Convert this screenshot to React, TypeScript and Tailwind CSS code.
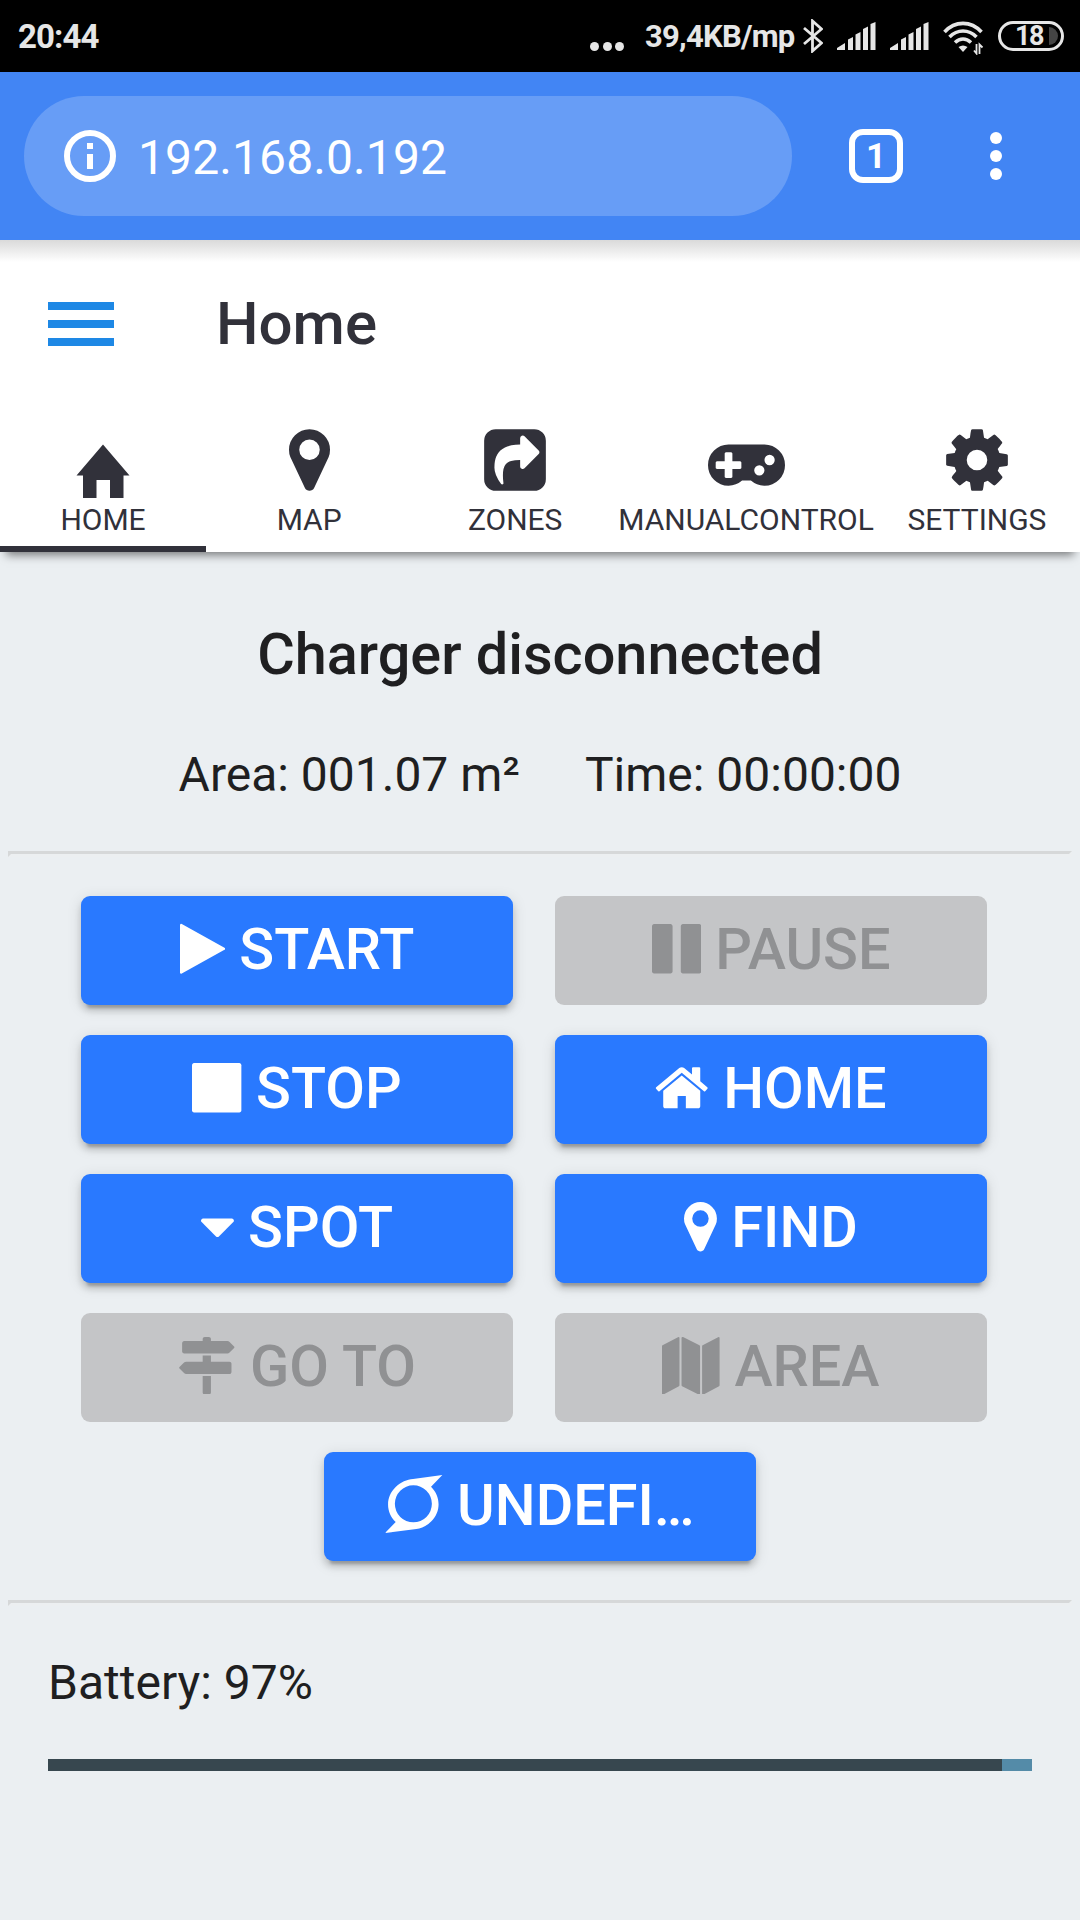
// ============================================================
// Mower control panel: browser chrome + home tab
// ============================================================
import type { ReactNode } from 'react';
import clsx from 'clsx';

type Glyph = { w: number; d: string };

// Font glyphs, 1792 units per em, y axis pointing up from the baseline
const GLYPHS = {
  marker: {
    w: 1024,
    d: 'M768 896q0 106 -75 181t-181 75t-181 -75t-75 -181t75 -181t181 -75t181 75t75 181zM1024 896q0 -109 -33 -179l-364 -774q-16 -33 -47.5 -52t-67.5 -19t-67.5 19t-46.5 52l-365 774q-33 70 -33 179q0 212 150 362t362 150t362 -150t150 -362z',
  },
  share: {
    w: 1536,
    d: 'M1005 435l352 352q19 19 19 45t-19 45l-352 352q-30 31 -69 14q-40 -17 -40 -59v-160q-119 0 -216 -19.5t-162.5 -51t-114 -79t-76.5 -95.5t-44.5 -109t-21.5 -111.5t-5 -110.5q0 -181 167 -404q11 -12 25 -12q7 0 13 3q22 9 19 33q-44 354 62 473q46 52 130 75.5 t224 23.5v-160q0 -42 40 -59q12 -5 24 -5q26 0 45 19zM1536 1120v-960q0 -119 -84.5 -203.5t-203.5 -84.5h-960q-119 0 -203.5 84.5t-84.5 203.5v960q0 119 84.5 203.5t203.5 84.5h960q119 0 203.5 -84.5t84.5 -203.5z',
  },
  gamepad: {
    w: 1920,
    d: 'M832 448v128q0 14 -9 23t-23 9h-192v192q0 14 -9 23t-23 9h-128q-14 0 -23 -9t-9 -23v-192h-192q-14 0 -23 -9t-9 -23v-128q0 -14 9 -23t23 -9h192v-192q0 -14 9 -23t23 -9h128q14 0 23 9t9 23v192h192q14 0 23 9t9 23zM1408 384q0 53 -37.5 90.5t-90.5 37.5t-90.5 -37.5t-37.5 -90.5 t37.5 -90.5t90.5 -37.5t90.5 37.5t37.5 90.5zM1664 640q0 53 -37.5 90.5t-90.5 37.5t-90.5 -37.5t-37.5 -90.5t37.5 -90.5t90.5 -37.5t90.5 37.5t37.5 90.5zM1920 512q0 -212 -150 -362t-362 -150q-192 0 -338 128h-220q-146 -128 -338 -128q-212 0 -362 150t-150 362 t150 362t362 150h896q212 0 362 -150t150 -362z',
  },
  cog: {
    w: 1536,
    d: 'M1024 640q0 106 -75 181t-181 75t-181 -75t-75 -181t75 -181t181 -75t181 75t75 181zM1536 749v-222q0 -12 -8 -23t-20 -13l-185 -28q-19 -54 -39 -91q35 -50 107 -138q10 -12 10 -25t-9 -23q-27 -37 -99 -108t-94 -71q-12 0 -26 9l-138 108q-44 -23 -91 -38 q-16 -136 -29 -186q-7 -28 -36 -28h-222q-14 0 -24.5 8.5t-11.5 21.5l-28 184q-49 16 -90 37l-141 -107q-10 -9 -25 -9q-14 0 -25 11q-126 114 -165 168q-7 10 -7 23q0 12 8 23q15 21 51 66.5t54 70.5q-27 50 -41 99l-183 27q-13 2 -21 12.5t-8 23.5v222q0 12 8 23t19 13 l186 28q14 46 39 92q-40 57 -107 138q-10 12 -10 24q0 10 9 23q26 36 98.5 107.5t94.5 71.5q13 0 26 -10l138 -107q44 23 91 38q16 136 29 186q7 28 36 28h222q14 0 24.5 -8.5t11.5 -21.5l28 -184q49 -16 90 -37l142 107q9 9 24 9q13 0 25 -10q129 -119 165 -170q7 -8 7 -22 q0 -12 -8 -23q-15 -21 -51 -66.5t-54 -70.5q26 -50 41 -98l183 -28q13 -2 21 -12.5t8 -23.5z',
  },
  play: {
    w: 1408,
    d: 'M1384 609l-1328 -738q-23 -13 -39.5 -3t-16.5 36v1472q0 26 16.5 36t39.5 -3l1328 -738q23 -13 23 -31t-23 -31z',
  },
  pause: {
    w: 1536,
    d: 'M1536 1344v-1408q0 -26 -19 -45t-45 -19h-512q-26 0 -45 19t-19 45v1408q0 26 19 45t45 19h512q26 0 45 -19t19 -45zM640 1344v-1408q0 -26 -19 -45t-45 -19h-512q-26 0 -45 19t-19 45v1408q0 26 19 45t45 19h512q26 0 45 -19t19 -45z',
  },
  stop: {
    w: 1536,
    d: 'M1536 1344v-1408q0 -26 -19 -45t-45 -19h-1408q-26 0 -45 19t-19 45v1408q0 26 19 45t45 19h1408q26 0 45 -19t19 -45z',
  },
  home: {
    w: 1664,
    d: 'M1408 544v-480q0 -26 -19 -45t-45 -19h-384v384h-256v-384h-384q-26 0 -45 19t-19 45v480q0 1 .5 3t.5 3l575 474l575 -474q1 -2 1 -6zM1631 613l-62 -74q-8 -9 -21 -11h-3q-13 0 -21 7l-692 577l-692 -577q-12 -8 -24 -7q-13 2 -21 11l-62 74q-8 10 -7 23.5t11 21.5 l719 599q32 26 76 26t76 -26l244 -204v195q0 14 9 23t23 9h192q14 0 23 -9t9 -23v-408l219 -182q10 -8 11 -21.5t-7 -23.5z',
  },
  caret: {
    w: 1024,
    d: 'M1024 832q0 -26 -19 -45l-448 -448q-19 -19 -45 -19t-45 19l-448 448q-19 19 -19 45t19 45t45 19h896q26 0 45 -19t19 -45z',
  },
  signs: {
    w: 1792,
    d: 'M1745 1239q10 -10 10 -23t-10 -23l-141 -141q-28 -28 -68 -28h-1344q-26 0 -45 19t-19 45v256q0 26 19 45t45 19h576v64q0 26 19 45t45 19h128q26 0 45 -19t19 -45v-64h512q40 0 68 -28zM768 320h256v-512q0 -26 -19 -45t-45 -19h-128q-26 0 -45 19t-19 45v512zM1600 768 q26 0 45 -19t19 -45v-256q0 -26 -19 -45t-45 -19h-1344q-40 0 -68 28l-141 141q-10 10 -10 23t10 23l141 141q28 28 68 28h512v192h256v-192h576z',
  },
  map: {
    w: 1792,
    d: 'M512 1536q13 0 22.5 -9.5t9.5 -22.5v-1472q0 -20 -17 -28l-480 -256q-7 -4 -15 -4q-13 0 -22.5 9.5t-9.5 22.5v1472q0 20 17 28l480 256q7 4 15 4zM1760 1536q13 0 22.5 -9.5t9.5 -22.5v-1472q0 -20 -17 -28l-480 -256q-7 -4 -15 -4q-13 0 -22.5 9.5t-9.5 22.5v1472 q0 20 17 28l480 256q7 4 15 4zM640 1536q8 0 14 -3l512 -256q18 -10 18 -29v-1472q0 -13 -9.5 -22.5t-22.5 -9.5q-8 0 -14 3l-512 256q-18 10 -18 29v1472q0 13 9.5 22.5t22.5 9.5z',
  },
} satisfies Record<string, Glyph>;

type GlyphName = keyof typeof GLYPHS;

function GlyphIcon({ name, className }: { name: GlyphName; className: string }) {
  const glyph = GLYPHS[name];
  return (
    <svg viewBox={`0 0 ${glyph.w} 1792`} fill="currentColor" className={className}>
      <path transform="translate(0 1536) scale(1 -1)" d={glyph.d} />
    </svg>
  );
}

// Ring with two spikes, used by the mowing mode button
function ModeIcon() {
  return (
    <svg viewBox="0 0 172 174" fill="currentColor" className="inline h-[58px] w-[57.4px] align-[-8.4px]">
      <path
        fillRule="evenodd"
        d="M0 174L32 141C3 114 0 66 32 36C47 21 66 14 84 12L172 0L138 35C168 64 168 110 139 139C124 154 108 160 94 162ZM85 31A55.5 55.5 0 1 0 85 142A55.5 55.5 0 1 0 85 31Z"
      />
    </svg>
  );
}

function SignalIcon() {
  return (
    <svg viewBox="0 0 39 28" fill="currentColor" className="h-7 w-[39px]">
      <path d="M0 28v-2l8-5v7zM11 17.5l5-2.5v13h-5zM18.500 12.500l5-2.500v18h-5zM26 7l5-2.500V28h-5zM33.500 2l5-2v28h-5z" />
    </svg>
  );
}

function StatusBar() {
  return (
    <header className="flex h-[72px] items-center bg-black pr-4 pl-[18px] text-[#e6e6e6]">
      <span className="flex-1 pt-0.5 text-[33px] leading-[70px] font-bold tracking-[-0.9px]">20:44</span>
      <span className="mt-[20px] mr-[21px] flex gap-[3.500px]">
        <i className="size-[9px] rounded-full bg-current" />
        <i className="size-[9px] rounded-full bg-current" />
        <i className="size-[9px] rounded-full bg-current" />
      </span>
      <span className="mr-2 w-[150px] pt-0.5 text-[31px] leading-[70px] font-bold tracking-[-0.75px] whitespace-nowrap">39,4KB/mp</span>
      <svg viewBox="0 0 20 34" fill="none" stroke="currentColor" strokeWidth="2.8" className="mr-3.5 h-[34px] w-5">
        <path d="M1 9L18.500 24L9.500 32V2L18.500 10L1 25" />
      </svg>
      <SignalIcon />
      <span className="w-3.5" />
      <SignalIcon />
      <svg viewBox="0 0 42 34" fill="none" stroke="currentColor" strokeWidth="3.6" className="mt-1 ml-3.5 h-[34px] w-[42px]">
        <path d="M1.500 11C12-.5 28-.5 38.500 11M6.500 16C14.500 8 25.500 8 33.500 16M12 21.500C17 17 23 17 28 21.500" />
        <path d="M15.500 26q4.500-3 9 0L20 31z" fill="currentColor" stroke="none" />
        <path d="M33.500 23v9.500l-2.500-3M36.500 33v-9.500l3 3" strokeWidth="1.800" />
      </svg>
      <span className="ml-[13px] flex h-[30px] w-[66px] items-center justify-end rounded-full border-[3px] border-current pr-[3px]">
        <span className="mr-1.5 text-[27px] leading-[27px] font-bold tracking-[-1.500px]">18</span>
        <i className="h-[18px] w-[9px] rounded-r-full bg-[#444]" />
      </span>
    </header>
  );
}

function BrowserBar() {
  return (
    <div className="flex h-[168px] items-center bg-[#4285f4] pl-6 text-white">
      <div className="flex h-[120px] w-[768px] items-center rounded-full bg-[#679df6] pl-10">
        <svg viewBox="0 0 52 52" className="size-[52px]" fill="none">
          <circle cx="26" cy="26" r="23" stroke="currentColor" strokeWidth="6" />
          <path d="M23 13h6v6h-6zM23 24h6v15h-6z" fill="currentColor" />
        </svg>
        <span className="pt-[3px] pl-[22px] text-[48px] leading-[60px] tracking-[0.1px]">192.168.0.192</span>
      </div>
      <div className="ml-[57px] flex h-[54px] w-[54px] items-center justify-center rounded-[14px] border-[6px] border-white pt-0.5 text-[35px] leading-[40px] font-bold">
        1
      </div>
      <div className="ml-[87px] flex flex-col gap-1.5">
        <i className="size-3 rounded-full bg-white" />
        <i className="size-3 rounded-full bg-white" />
        <i className="size-3 rounded-full bg-white" />
      </div>
    </div>
  );
}

function Tab({ label, active, children }: { label: string; active?: boolean; children: ReactNode }) {
  return (
    <div className={clsx('flex flex-1 flex-col items-center border-b-[6px] pt-4', active ? 'border-[#31313a]' : 'border-transparent')}>
      <div className="h-[72px]">{children}</div>
      <span className="mt-1.5 text-[30px] leading-9">{label}</span>
    </div>
  );
}

function AppHeader() {
  return (
    <div className="relative h-[312px] bg-white text-[#31313a] shadow-[0_9px_9px_-6px_rgba(0,0,0,0.5)]">
      <div className="flex h-[168px] items-center bg-linear-to-b from-[#dadada] to-white to-[22px] pl-12">
        <div className="flex w-[66px] flex-col gap-2.5">
          <i className="h-2 bg-[#1e88e5]" />
          <i className="h-2 bg-[#1e88e5]" />
          <i className="h-2 bg-[#1e88e5]" />
        </div>
        <h1 className="ml-[102px] text-[60px] leading-[72px] font-medium">Home</h1>
      </div>
      <nav className="flex h-36">
        <Tab label="HOME" active>
          <svg viewBox="0 0 53 72" fill="currentColor" className="h-[72px] w-[53px] overflow-visible">
            <path d="M26 20.500L52.500 51.500H46.500V74H33V56H19.500V74H6V51.500H-.5Z" />
          </svg>
        </Tab>
        <Tab label="MAP">
          <GlyphIcon name="marker" className="h-[72px] w-[41px]" />
        </Tab>
        <Tab label="ZONES">
          <GlyphIcon name="share" className="h-[72px] w-[62px]" />
        </Tab>
        <Tab label="MANUALCONTROL">
          <GlyphIcon name="gamepad" className="h-[72px] w-[77px]" />
        </Tab>
        <Tab label="SETTINGS">
          <GlyphIcon name="cog" className="h-[72px] w-[62px]" />
        </Tab>
      </nav>
    </div>
  );
}

type ActionProps = { label: string; icon?: GlyphName; disabled?: boolean };

const ACTIONS: ActionProps[] = [
  { label: 'START', icon: 'play' },
  { label: 'PAUSE', icon: 'pause', disabled: true },
  { label: 'STOP', icon: 'stop' },
  { label: 'HOME', icon: 'home' },
  { label: 'SPOT', icon: 'caret' },
  { label: 'FIND', icon: 'marker' },
  { label: 'GO TO', icon: 'signs', disabled: true },
  { label: 'AREA', icon: 'map', disabled: true },
];

function ActionButton({ label, icon, disabled }: ActionProps) {
  return (
    <button
      type="button"
      disabled={disabled}
      className={clsx(
        'h-[109px] w-[432px] rounded-[9px] pb-[2px] text-center text-[57.6px] leading-[107px] font-medium whitespace-nowrap',
        disabled
          ? 'bg-[#c4c5c7] text-[#909193]'
          : 'bg-[#2979ff] text-white shadow-[0_6px_6px_0_rgba(0,0,0,0.14),0_3px_15px_0_rgba(0,0,0,0.12),0_9px_3px_-6px_rgba(0,0,0,0.2)]',
      )}
    >
      {icon ? <GlyphIcon name={icon} className="inline h-[57.6px] w-auto align-[-8.2px]" /> : <ModeIcon />} {label}
    </button>
  );
}

function Divider() {
  return <hr className="mx-2 h-0 border-[3px] border-t-[#d6d8d9] border-r-[#eceff1] border-b-[#eceff1] border-l-[#d6d8d9]" />;
}

export default function App() {
  const battery = 97;

  return (
    <div className="flex h-[1920px] w-[1080px] flex-col overflow-hidden bg-[#ebeff2] font-[Roboto,sans-serif] text-[#1f1f21]">
      <StatusBar />
      <BrowserBar />
      <AppHeader />

      <main>
        <h2 className="pt-[69px] text-center text-[57.6px] leading-[68px] font-medium">Charger disconnected</h2>
        <div className="mt-[58px] mb-12 flex justify-center gap-[65px] text-[48px] leading-[56px]">
          <span>Area: 001.07 m²</span>
          <span>Time: 00:00:00</span>
        </div>
        <Divider />

        <div className="mt-[39px] mb-[39px] ml-[81px] grid w-[906px] grid-cols-2 justify-between gap-x-[42px] gap-y-[30px]">
          {ACTIONS.map((action) => (
            <ActionButton key={action.label} {...action} />
          ))}
          <div className="col-span-2 ml-[243px]">
            <ActionButton label="UNDEFI…" />
          </div>
        </div>
        <Divider />

        <section className="px-12 pt-[49px]">
          <p className="text-[48px] leading-[56px]">Battery: {battery}%</p>
          <div className="mt-12 h-3 bg-[#548ba8]">
            <div className="h-full bg-[#37474f]" style={{ width: `${battery}%` }} />
          </div>
        </section>
      </main>
    </div>
  );
}
